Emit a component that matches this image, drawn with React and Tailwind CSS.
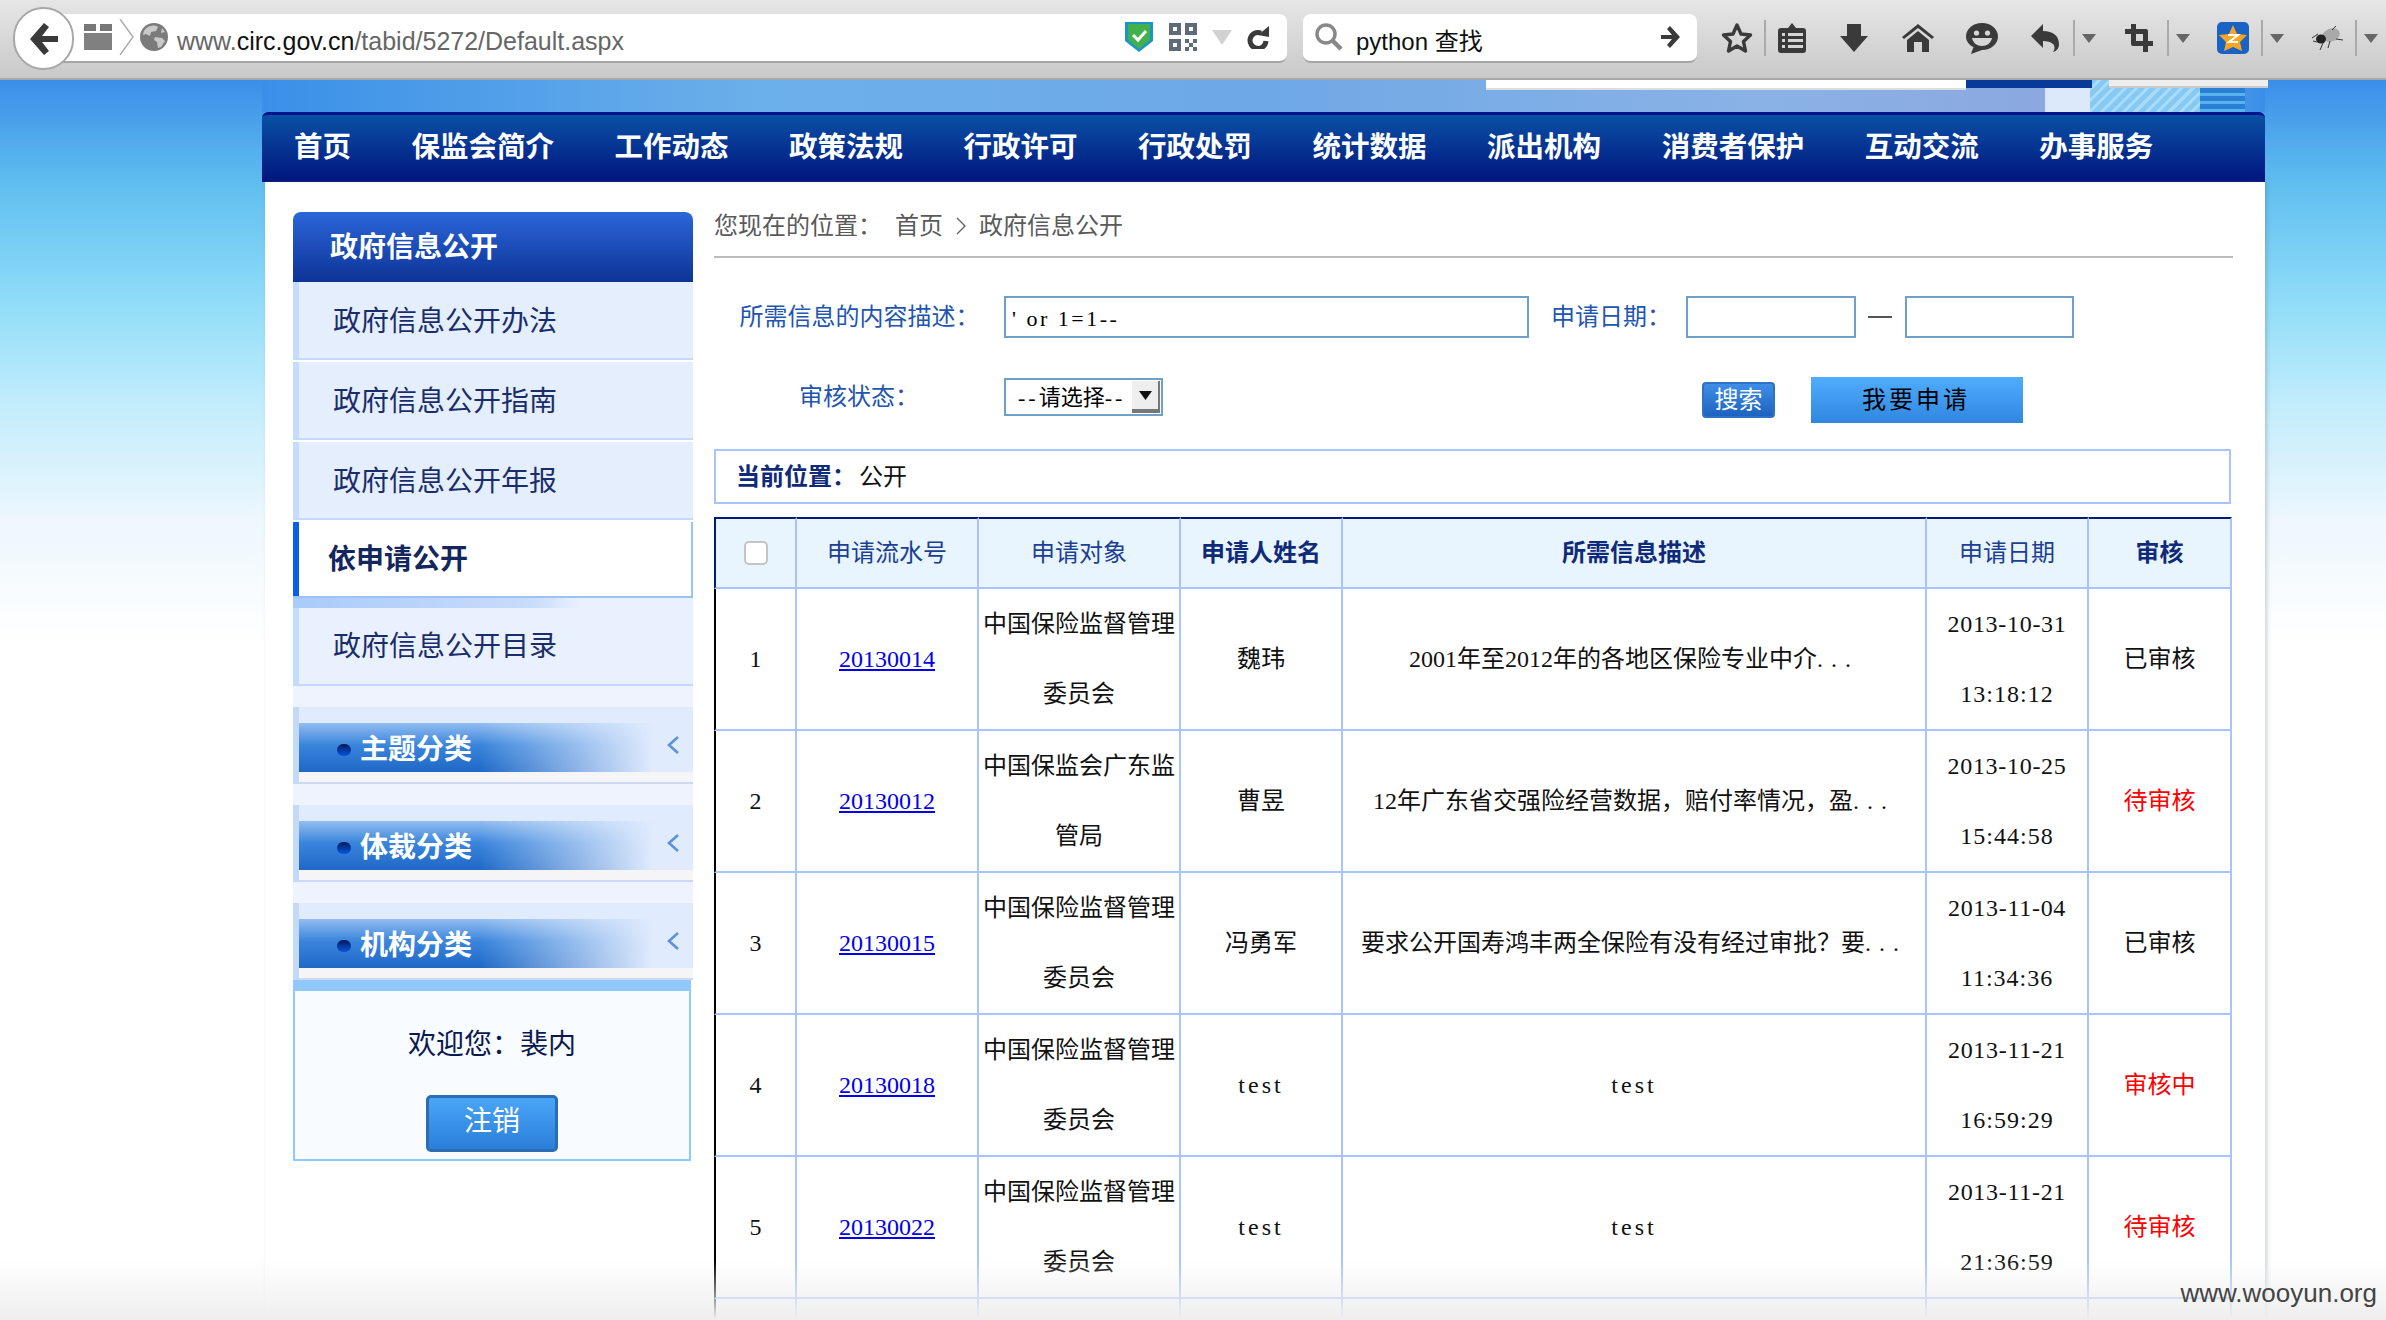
import React from "react";

const D = "#3a3a3a";

function Sep({ ml }) {
  return <div className={`w-[2px] h-[36px] bg-[#aaaaaa] shrink-0 ${ml}`} />;
}
function Caret() {
  return (
    <svg width="14" height="9" viewBox="0 0 14 9" className="ml-[7px] shrink-0">
      <path d="M0 0H14L7 9Z" fill="#666" />
    </svg>
  );
}

function Toolbar() {
  return (
    <div className="relative h-[80px] shrink-0 border-b-2 border-[#a9a9a9] bg-[linear-gradient(to_bottom,#e6e6e6,#c9c9c9)] flex items-center pl-[50px] pb-[2px]">
      <div className="absolute left-[13px] top-[7px] w-[61px] h-[63px] rounded-full bg-white border-2 border-[#a8a8a8] flex items-center justify-center">
        <svg width="30" height="34" viewBox="0 0 30 34">
          <path d="M15 1 1 17l14 16 5-4-7-9h16v-6H13l7-9Z" fill={D} />
        </svg>
      </div>
      <div className="w-[1237px] h-[49px] bg-white rounded-r-lg border-b-2 border-[#a5a5a5] flex items-center pl-[34px] pr-[18px]">
        <svg width="28" height="26" viewBox="0 0 28 26" className="shrink-0">
          <path d="M0 0H12V7H0ZM16 0H28V7H16Z" fill="#777" />
          <path d="M0 9H28V26H0Z" fill="#808080" />
        </svg>
        <svg width="15" height="36" viewBox="0 0 15 36" className="ml-[7px] shrink-0">
          <path d="M1 0 14 18 1 36" fill="none" stroke="#aaa" strokeWidth="1.4" />
        </svg>
        <svg width="28" height="28" viewBox="0 0 28 28" className="ml-[6px] shrink-0">
          <circle cx="14" cy="14" r="14" fill="#7b7b7b" />
          <path d="M8 4c4-2 8-2 10 0l-2 4-5 1-1 4-4-2-3 1c0-4 2-6 5-8ZM15 14l7 1 3 3-4 6-3 1-1-6-3-2ZM22 5l3 4-4 1Z" fill="#c9c9c9" />
        </svg>
        <div className="ml-[9px] pt-[9px] flex-1 font-['Liberation_Sans',sans-serif] text-[25px] text-[#666] whitespace-nowrap">
          www.<span className="text-[#111]">circ.gov.cn</span>/tabid/5272/Default.aspx
        </div>
        <svg width="28" height="30" viewBox="0 0 28 30" className="shrink-0">
          <path d="M0 0H28V19L14 30 0 19Z" fill="#1c93c9" />
          <path d="M3 2H25V18L14 27 3 18Z" fill="#43b14b" />
          <path d="M8 13l5 5 8-9" fill="none" stroke="#fff" strokeWidth="3" />
        </svg>
        <svg width="29" height="28" viewBox="0 0 7 7" className="ml-[15px] shrink-0" shapeRendering="crispEdges">
          <path d="M0 0H3V3H0ZM4 0H7V3H4ZM0 4H3V7H0ZM1 1V2H2V1ZM5 1V2H6V1ZM1 5V6H2V5Z" fill="#5f6b7a" fillRule="evenodd" />
          <path d="M4 4H5V5H4ZM6 4H7V5H6ZM5 5H6V6H5ZM4 6H5V7H4ZM6 6H7V7H6Z" fill="#5f6b7a" />
        </svg>
        <svg width="20" height="15" viewBox="0 0 20 15" className="ml-[15px] shrink-0">
          <path d="M0 0H20L10 15Z" fill="#d2d2d2" />
        </svg>
        <svg width="22" height="23" viewBox="0 0 22 23" className="ml-[15px] shrink-0">
          <path d="M14 7A8 8 0 1 0 19 15" fill="none" stroke={D} strokeWidth="5" />
          <path d="M11 9 22 0V11Z" fill={D} />
        </svg>
      </div>
      <div className="ml-[16px] w-[394px] h-[49px] bg-white rounded-lg border-b-2 border-[#a5a5a5] flex items-center pl-[12px] pr-[17px]">
        <svg width="28" height="28" viewBox="0 0 28 28" className="shrink-0">
          <circle cx="11" cy="11" r="9" fill="none" stroke="#888" strokeWidth="3.5" />
          <path d="M17 17 26 26" stroke="#888" strokeWidth="4.5" />
        </svg>
        <div className="ml-[13px] pt-[9px] flex-1 font-['Liberation_Sans','Noto_Sans_CJK_SC',sans-serif] text-[24px] leading-[30px] text-[#111] whitespace-nowrap">python 查找</div>
        <svg width="19" height="22" viewBox="0 0 19 22" className="shrink-0">
          <path d="M9 0 19 11 9 22 6 19l5-6H0V9h11L6 3Z" fill={D} />
        </svg>
      </div>
      <svg width="32" height="32" viewBox="0 0 32 32" className="ml-[24px] shrink-0">
        <path d="M16 3 20 12 29.5 13 22.5 19.5 24.5 29 16 24 7.5 29 9.5 19.5 2.5 13 12 12Z" fill="none" stroke={D} strokeWidth="3.4" strokeLinejoin="round" />
      </svg>
      <Sep ml="ml-[11px]" />
      <svg width="28" height="30" viewBox="0 0 28 30" className="ml-[12px] shrink-0">
        <path d="M3 5H10L14 0 18 5H25Q28 5 28 8V27Q28 30 25 30H3Q0 30 0 27V8Q0 5 3 5Z" fill={D} />
        <path d="M10 10H25V13H10ZM10 16H25V19H10ZM10 22H25V25H10ZM4 10H7V13H4ZM4 16H7V19H4ZM4 22H7V25H4Z" fill="#d6d6d6" />
      </svg>
      <svg width="28" height="28" viewBox="0 0 28 28" className="ml-[34px] shrink-0">
        <path d="M7 0H21V12H28L14 28 0 12H7Z" fill={D} />
      </svg>
      <svg width="32" height="28" viewBox="0 0 32 28" className="ml-[34px] shrink-0">
        <path d="M0 13 16 0 32 13 30 15 16 4 2 15Z" fill={D} />
        <path d="M16 7 27 16V28H20V18H12V28H5V16Z" fill={D} />
      </svg>
      <svg width="32" height="31" viewBox="0 0 32 31" className="ml-[32px] shrink-0">
        <path d="M16 0C25 0 32 6 32 13.500S25 27 16 27L5 31 7.500 24C3 22 0 18 0 13.500 0 6 7 0 16 0Z" fill={D} />
        <circle cx="10.500" cy="10" r="2.600" fill="#d6d6d6" />
        <circle cx="21.500" cy="10" r="2.600" fill="#d6d6d6" />
        <path d="M6 15H26C25 20 21 23 16 23S7 20 6 15Z" fill="#d6d6d6" />
      </svg>
      <svg width="28" height="28" viewBox="0 0 28 28" className="ml-[33px] shrink-0">
        <path d="M12 0V7C22 7 28 12 28 20 28 24 26 27 22 28 24 25 24 22 22 20 20 18 16 17 12 17V24L0 12Z" fill={D} />
      </svg>
      <Sep ml="ml-[14px]" />
      <Caret />
      <svg width="28" height="28" viewBox="0 0 28 28" className="ml-[29px] shrink-0">
        <path d="M6 0H11V5H21Q23 5 23 7V17H28V22H23V28H18V22H8Q6 22 6 20V10H0V5H6ZM11 10V17H18V10Z" fill={D} fillRule="evenodd" />
      </svg>
      <Sep ml="ml-[14px]" />
      <Caret />
      <svg width="32" height="32" viewBox="0 0 32 32" className="ml-[27px] shrink-0">
        <rect width="32" height="32" rx="5" fill="#1a62c4" />
        <path d="M16 3 20 12 30 13 23 20 25 29 16 25 7 29 9 20 2 13 12 12Z" fill="#f6a623" />
        <path d="M11 13H21L12 20H21" fill="none" stroke="#fff" strokeWidth="2" />
      </svg>
      <Sep ml="ml-[12px]" />
      <Caret />
      <svg width="31" height="25" viewBox="0 0 31 25" className="ml-[28px] shrink-0">
        <ellipse cx="19" cy="9" rx="9" ry="6.500" fill="#a9a9a9" transform="rotate(-20 19 9)" />
        <ellipse cx="9" cy="13" rx="5" ry="4.500" fill="#222" />
        <path d="M6 8 0 12M5 16 1 15M11 17 8 24M18 15 16 22M24 13 31 14M20 4 24 0" stroke="#333" strokeWidth="1" fill="none" />
      </svg>
      <Sep ml="ml-[12px]" />
      <Caret />
    </div>
  );
}

function Banner() {
  return (
    <div className="relative h-[32px] flex items-start bg-[linear-gradient(to_right,#3a90e8,#6cb0ea_25%,#6ea8e6_50%,#8ab2e6_75%,#8ba8e0_89%,#8ba8e0_90%,#3a90e8_100%)]">
      <div className="absolute right-[20px] top-0 w-[200px] h-[32px] flex">
        <div className="w-[45px] bg-[#dbe9fb]" />
        <div className="w-[110px] bg-[repeating-linear-gradient(135deg,#86c9f2_0px,#86c9f2_5px,#a9dcf8_5px,#a9dcf8_8px)]" />
        <div className="w-[45px] bg-[repeating-linear-gradient(to_bottom,#2b7ed8_0px,#2b7ed8_5px,#58b2ec_5px,#58b2ec_8px)]" />
      </div>
      <div className="relative ml-[1224px] w-[480px] h-[10px] bg-white border-b-2 border-[#dddddd]" />
      <div className="relative w-[126px] h-[8px] bg-[#083a9a]" />
      <div className="relative ml-[17px] w-[159px] h-[8px] -mr-[3px] bg-[#eeeeee] border-b-2 border-[#cccccc]" />
    </div>
  );
}

const navItems = ["首页", "保监会简介", "工作动态", "政策法规", "行政许可", "行政处罚", "统计数据", "派出机构", "消费者保护", "互动交流", "办事服务"];

function Nav() {
  return (
    <div className="h-[70px] rounded-t-[6px] border-t-[3px] border-[#00148c] bg-[linear-gradient(to_bottom,#0a50a5,#00157e)] flex items-center gap-[60.5px] pl-[32px] text-[28.5px] leading-none font-bold text-white">
      {navItems.map((t) => (
        <span key={t} className="whitespace-nowrap">{t}</span>
      ))}
    </div>
  );
}

function SideItem({ children }) {
  return (
    <div className="h-[78px] mb-[2px] flex bg-[#e4eefd] border-b-2 border-[#c3d9ff]">
      <div className="w-[6px] bg-[#c3dcff]" />
      <div className="pl-[34px] pt-[4px] flex items-center text-[28px] text-[#1a2d6b]">{children}</div>
    </div>
  );
}

function Section({ title }) {
  return (
    <div>
      <div className="h-[21px] bg-[#eef3fe]" />
      <div className="h-[77px] bg-[#e0ebfd] flex">
        <div className="w-[6px] bg-[#c3d9f8]" />
        <div className="flex-1 flex flex-col">
          <div className="h-[16px]" />
          <div className="h-[49px] flex items-center">
            <div className="w-[361px] h-[49px] flex items-center pl-[38px] pt-[4px] bg-[linear-gradient(to_right,transparent_50%,#e0ebfd_98%),linear-gradient(to_bottom,#93bdf0,#3a85dc_45%,#1f68c6)]">
              <span className="w-[14px] h-[12px] rounded-full bg-[linear-gradient(to_bottom,#001a5a,#0a55e0)]" />
              <span className="ml-[9px] text-[28px] leading-none font-bold text-white whitespace-nowrap">{title}</span>
            </div>
            <svg width="14" height="18" viewBox="0 0 14 18" className="ml-[6px] -mt-[6px]">
              <path d="M12 1 3 9l9 8" fill="none" stroke="#5b92dc" strokeWidth="2.600" />
            </svg>
          </div>
          <div className="h-[12px] bg-[#f5f5f8] border-b-2 border-[#cdd8f5]" />
        </div>
      </div>
    </div>
  );
}

function Sidebar() {
  return (
    <div className="w-[400px] shrink-0">
      <div className="h-[70px] rounded-t-[8px] bg-[linear-gradient(to_bottom,#2b66d9,#0d3396)] flex items-center pl-[37px] pt-[2px] text-[28px] font-bold text-white">政府信息公开</div>
      <SideItem>政府信息公开办法</SideItem>
      <SideItem>政府信息公开指南</SideItem>
      <SideItem>政府信息公开年报</SideItem>
      <div className="h-[76px] flex bg-white border-b-2 border-r-2 border-[#9cc2fb]">
        <div className="w-[6px] bg-[#0a5ee8]" />
        <div className="pl-[29px] pt-[1px] flex items-center text-[28px] font-bold text-[#14265e]">依申请公开</div>
      </div>
      <div className="h-[10px] bg-[linear-gradient(to_right,#a9cbf9,#c8dcfb_60%,#eaf1fe_72%)]" />
      <div className="h-[78px] flex bg-[#eaf1fe] border-b-2 border-[#c3d9ff]">
        <div className="w-[6px] bg-[#c3dcff]" />
        <div className="pl-[34px] pt-[2px] flex items-center text-[28px] text-[#1a2d6b]">政府信息公开目录</div>
      </div>
      <Section title="主题分类" />
      <Section title="体裁分类" />
      <Section title="机构分类" />
      <div className="w-[398px] h-[181px] bg-[#f8fbff] border-2 border-t-[11px] border-[#90c8ff] flex flex-col items-center pt-[34px]">
        <div className="h-[40px] leading-[40px] text-[28px] text-[#0a1a50]">{"欢迎您\uFF1A裴内"}</div>
        <div className="mt-[30px] w-[132px] h-[57px] rounded-[5px] border-[3px] border-[#2a6db5] bg-[linear-gradient(to_bottom,#4aa5f7,#2a7fd8)] flex items-center justify-center pb-[3px] text-[28px] text-white">注销</div>
      </div>
    </div>
  );
}

function FormBox({ w, value }) {
  return (
    <input
      readOnly
      value={value}
      className={`${w} h-[42px] shrink-0 border-2 border-[#6fa0c9] bg-white pl-[6px] pt-[3px] text-[22px] tracking-[2.500px] text-black outline-none`}
    />
  );
}

function Form() {
  return (
    <div>
      <div className="mt-[38px] flex items-center h-[42px]">
        <div className="w-[290px] pl-[1px] text-center text-[24px] text-[#2255b0] whitespace-nowrap">{"所需信息的内容描述\uFF1A"}</div>
        <FormBox w="w-[525px]" value="' or 1=1--" />
        <div className="ml-[22px] w-[135px] text-[24px] text-[#2255b0] whitespace-nowrap">{"申请日期\uFF1A"}</div>
        <FormBox w="w-[170px]" value="" />
        <div className="ml-[12px] w-[24px] h-[2px] bg-[#555]" />
        <div className="ml-[13px]"><FormBox w="w-[169px]" value="" /></div>
      </div>
      <div className="mt-[39px] flex items-start h-[46px]">
        <div className="w-[290px] h-[38px] mt-[1px] leading-[38px] text-center text-[24px] text-[#2255b0]">{"审核状态\uFF1A"}</div>
        <div className="mt-[1px] w-[159px] h-[38px] border-2 border-[#6fa0c9] bg-white flex items-center justify-between pl-[12px] pr-[1px] shrink-0">
          <span className="text-[22px] whitespace-nowrap"><span className="tracking-[3px]">--</span>请选择<span className="tracking-[3px]">--</span></span>
          <div className="w-[28px] h-[32px] bg-[#eeeeee] border-r-2 border-b-4 border-[#777] flex items-center justify-center">
            <svg width="13" height="9" viewBox="0 0 13 9"><path d="M0 0H13L6.500 9Z" fill="#111" /></svg>
          </div>
        </div>
        <div className="ml-[539px] mt-[5px] w-[73px] h-[36px] rounded-[4px] border-2 border-[#2f72c4] bg-[linear-gradient(to_bottom,#3f8ee6,#1d62c0)] flex items-center justify-center text-[24px] leading-none text-white shrink-0">搜索</div>
        <div className="ml-[36px] w-[212px] h-[46px] bg-[linear-gradient(to_bottom,#50adff,#2f86de)] flex items-center pl-[51px] text-[24px] leading-none tracking-[3px] text-black whitespace-nowrap shrink-0">我要申请</div>
      </div>
    </div>
  );
}

const rows = [
  ["1", "20130014", ["中国保险监督管理", "委员会"], "魏玮", "2001年至2012年的各地区保险专业中介", ["2013-10-31", "13:18:12"], "已审核", false],
  ["2", "20130012", ["中国保监会广东监", "管局"], "曹昱", "12年广东省交强险经营数据\uFF0C赔付率情况\uFF0C盈", ["2013-10-25", "15:44:58"], "待审核", true],
  ["3", "20130015", ["中国保险监督管理", "委员会"], "冯勇军", "要求公开国寿鸿丰两全保险有没有经过审批\uFF1F要", ["2013-11-04", "11:34:36"], "已审核", false],
  ["4", "20130018", ["中国保险监督管理", "委员会"], "test", "test", ["2013-11-21", "16:59:29"], "审核中", true],
  ["5", "20130022", ["中国保险监督管理", "委员会"], "test", "test", ["2013-11-21", "21:36:59"], "待审核", true],
];

const cellCls = "border-r-2 border-b-2 border-[#a8c4ff] text-center align-middle p-0 text-[24px] leading-[70px] text-[#111]";
const thCls = "border-r-2 border-b-2 border-t-2 border-r-[#a8c4ff] border-b-[#a8c4ff] border-t-[#001a7a] bg-[#e8f5ff] text-center align-middle p-0 text-[24px]";
const thN = "font-normal text-[#1c3f94]";
const thB = "font-bold text-[#0f2a7a]";

function DataTable() {
  return (
    <table className="mt-[13px] w-[1518px] table-fixed border-separate border-spacing-0">
      <colgroup>
        <col className="w-[83px]" />
        <col className="w-[182px]" />
        <col className="w-[202px]" />
        <col className="w-[162px]" />
        <col className="w-[584px]" />
        <col className="w-[162px]" />
        <col className="w-[143px]" />
      </colgroup>
      <thead>
        <tr className="h-[72px]">
          <th className={`${thCls} border-l-2 border-l-[#001a7a]`}>
            <div className="mx-auto w-[24px] h-[24px] rounded-[5px] border-2 border-[#c4c4c4] bg-white" />
          </th>
          <th className={`${thCls} ${thN}`}>申请流水号</th>
          <th className={`${thCls} ${thN}`}>申请对象</th>
          <th className={`${thCls} ${thB}`}>申请人姓名</th>
          <th className={`${thCls} ${thB}`}>所需信息描述</th>
          <th className={`${thCls} ${thN}`}>申请日期</th>
          <th className={`${thCls} ${thB}`}>审核</th>
        </tr>
      </thead>
      <tbody>
        {rows.map((r) => (
          <tr key={r[0]} className="h-[142px]">
            <td className={`${cellCls} border-l-2 border-l-black`}>{r[0]}</td>
            <td className={cellCls}><a href="#" className="text-[#0000ee] underline">{r[1]}</a></td>
            <td className={cellCls}>{r[2].map((l) => <div key={l} className="whitespace-nowrap">{l}</div>)}</td>
            <td className={cellCls}><span className={r[3] === "test" ? "tracking-[3px]" : ""}>{r[3]}</span></td>
            <td className={cellCls}>
              <span className={r[4] === "test" ? "tracking-[3px]" : ""}>{r[4]}</span>
              {r[4] !== "test" && <span className="tracking-[8px]">...</span>}
            </td>
            <td className={cellCls}>
              <div className="tracking-[0.700px]">{r[5][0]}</div>
              <div className="tracking-[1px]">{r[5][1]}</div>
            </td>
            <td className={`${cellCls} ${r[7] ? "text-[#ff0000]" : ""}`}>{r[6]}</td>
          </tr>
        ))}
        <tr className="h-[142px]">
          <td className={`${cellCls} border-l-2 border-l-black`} />
          <td className={cellCls} />
          <td className={cellCls} />
          <td className={cellCls} />
          <td className={cellCls} />
          <td className={cellCls} />
          <td className={cellCls} />
        </tr>
      </tbody>
    </table>
  );
}

function Main() {
  return (
    <div className="ml-[21px] w-[1519px] shrink-0">
      <div className="h-[76px] pt-[13px] border-b-2 border-[#bbbbbb] flex items-center text-[24px] text-[#5a5a5a] whitespace-nowrap">
        <span className="w-[181px]">{"您现在的位置\uFF1A"}</span>
        <span>首页</span>
        <svg width="10" height="18" viewBox="0 0 10 18" className="ml-[13px]">
          <path d="M1 1 9 9 1 17" fill="none" stroke="#666" strokeWidth="1.400" />
        </svg>
        <span className="ml-[13px]">政府信息公开</span>
      </div>
      <Form />
      <div className="mt-[26px] w-[1517px] h-[55px] border-2 border-[#a8c4ff] flex items-center pl-[20px] text-[24px] whitespace-nowrap">
        <span className="font-bold text-[#0f2a7a] w-[123px]">{"当前位置\uFF1A"}</span>
        <span className="text-[#111]">公开</span>
      </div>
      <DataTable />
    </div>
  );
}

export default function App() {
  return (
    <div className="relative w-[2386px] h-[1320px] overflow-hidden flex flex-col bg-white font-['Liberation_Serif','Noto_Sans_CJK_SC',serif]">
      <Toolbar />
      <div className="flex-1 min-h-0 bg-[linear-gradient(to_bottom,#3a8fe8_0px,#62c0f0_110px,#8fdcf8_220px,#c0ecfc_320px,#edf7fd_440px,#ffffff_560px)]">
        <div className="ml-[262px] w-[2003px]">
          <Banner />
          <Nav />
          <div className="ml-[3px] w-[2000px] h-[1200px] bg-white flex pl-[28px] shadow-[2px_0_4px_rgba(90,110,130,0.3)]">
            <div className="pt-[30px]"><Sidebar /></div>
            <Main />
          </div>
        </div>
      </div>
      <div className="absolute left-0 right-0 bottom-0 h-[60px] bg-[linear-gradient(to_bottom,rgba(238,238,238,0),rgba(238,238,238,1))] pointer-events-none" />
      <div className="absolute right-[9px] bottom-[14px] font-['Liberation_Sans',sans-serif] text-[26px] leading-none text-[#444] whitespace-nowrap">www.wooyun.org</div>
    </div>
  );
}
